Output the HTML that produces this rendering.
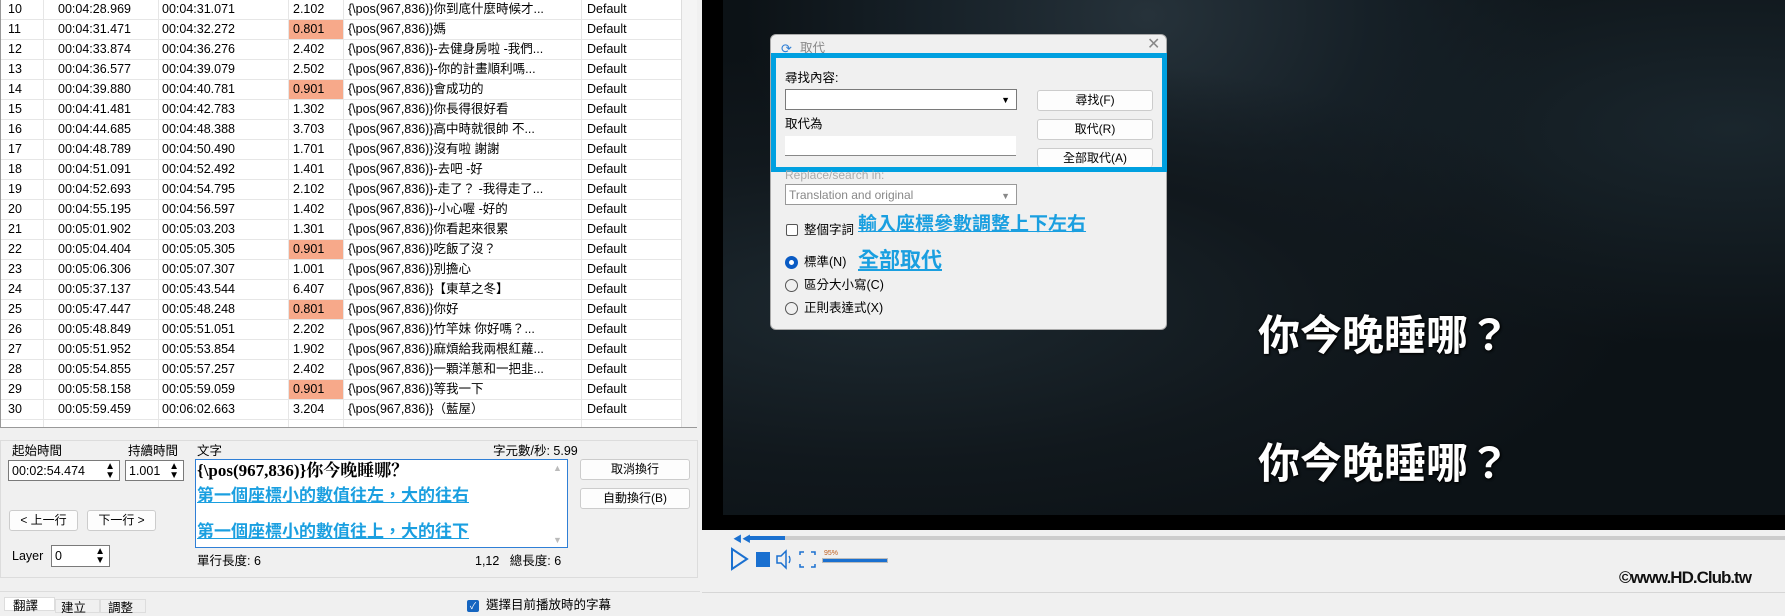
<!DOCTYPE html>
<html><head><meta charset="utf-8"><style>
*{box-sizing:border-box;margin:0;padding:0}
body{width:1785px;height:610px;overflow:hidden;background:#f0f0f0;position:relative;font-family:"Liberation Sans","Noto Sans CJK TC",sans-serif;font-size:12.5px;line-height:15px;color:#000}
.a{position:absolute;white-space:nowrap}
#tbl{position:absolute;left:0;top:0;width:697px;height:428px;background:#fff;border:1px solid #999;border-top:none;overflow:hidden}
.r{position:absolute;left:0;width:681px;height:20px;border-bottom:1px solid #e6e6e6}
.r span{position:absolute;top:2px;line-height:15px}
.c{position:absolute;top:0;width:1px;height:428px;background:#e6e6e6}
.hl{position:absolute;left:288px;width:54px;height:19px;background:#f7a98a}
.btn{position:absolute;background:#fdfdfd;border:1px solid #ccc;border-radius:3px;text-align:center;font-size:12px}
.inp{position:absolute;background:#fff;border:1px solid #7a7a7a}
.blue{color:#1a9fe0;font-weight:bold;text-decoration:underline}
</style></head><body>
<div id="tbl">
<div class="c" style="left:42px"></div><div class="c" style="left:157px"></div><div class="c" style="left:287px"></div><div class="c" style="left:342px"></div><div class="c" style="left:580px"></div><div class="c" style="left:681px"></div>
</div>
<div class="a" style="left:681px;top:0;width:16px;height:427px;background:#f4f4f4;border-left:1px solid #ddd"></div>

<!-- edit panel -->
<div class="a" style="left:0;top:440px;width:698px;height:138px;border:1px solid #dcdcdc;background:#f0f0f0"></div>
<div class="a" style="left:12px;top:444px">起始時間</div>
<div class="a" style="left:128px;top:444px">持續時間</div>
<div class="inp" style="left:8px;top:460px;width:112px;height:21px"><span class="a" style="left:3px;top:3px">00:02:54.474</span><span class="a" style="right:4px;top:1px;font-size:10px;line-height:9px">▲<br>▼</span></div>
<div class="inp" style="left:125px;top:460px;width:59px;height:21px"><span class="a" style="left:3px;top:3px">1.001</span><span class="a" style="right:4px;top:1px;font-size:10px;line-height:9px">▲<br>▼</span></div>
<div class="a" style="left:197px;top:444px">文字</div>
<div class="a" style="left:493px;top:444px">字元數/秒: 5.99</div>
<div class="a" style="left:195px;top:459px;width:373px;height:89px;background:#fff;border:1px solid #2f7fd6"></div>
<div class="a" style="left:197px;top:461px;line-height:20px;font-family:'Liberation Serif','Noto Serif CJK SC',serif;font-weight:bold;font-size:17px">{\pos(967,836)}你今晚睡哪？</div>
<div class="a blue" style="left:197px;top:485px;line-height:22px;font-size:17px">第一個座標小的數值往左，大的往右</div>
<div class="a blue" style="left:197px;top:521px;line-height:22px;font-size:17px">第一個座標小的數值往上，大的往下</div>
<div class="a" style="left:553px;top:461px;color:#bbb;font-size:9px">▲</div>
<div class="a" style="left:553px;top:533px;color:#bbb;font-size:9px">▼</div>
<div class="btn" style="left:580px;top:459px;width:110px;height:21px;line-height:19px">取消換行</div>
<div class="btn" style="left:580px;top:488px;width:110px;height:21px;line-height:19px">自動換行(B)</div>
<div class="btn" style="left:9px;top:510px;width:69px;height:21px;line-height:19px">&lt; 上一行</div>
<div class="btn" style="left:87px;top:510px;width:69px;height:21px;line-height:19px">下一行 &gt;</div>
<div class="a" style="left:12px;top:549px">Layer</div>
<div class="inp" style="left:51px;top:545px;width:59px;height:22px"><span class="a" style="left:3px;top:3px">0</span><span class="a" style="right:4px;top:1px;font-size:10px;line-height:9px">▲<br>▼</span></div>
<div class="a" style="left:197px;top:554px">單行長度: 6</div>
<div class="a" style="left:475px;top:554px">1,12 &nbsp;&nbsp;總長度: 6</div>
<div class="a" style="left:0;top:591px;width:700px;height:1px;background:#dcdcdc"></div>
<div class="a" style="left:4px;top:597px;width:51px;height:14px;background:#fff;border:1px solid #ddd;padding:1px 8px">翻譯</div>
<div class="a" style="left:55px;top:599px;width:45px;height:14px;border:1px solid #ddd;padding:1px 5px">建立</div>
<div class="a" style="left:100px;top:599px;width:46px;height:14px;border:1px solid #ddd;padding:1px 7px">調整</div>
<div class="a" style="left:467px;top:600px;width:12px;height:12px;background:#1565c0;border-radius:2px;color:#fff;font-size:9px;text-align:center;line-height:12px">✓</div>
<div class="a" style="left:486px;top:598px">選擇目前播放時的字幕</div>

<!-- video -->
<div class="a" style="left:702px;top:0;width:1083px;height:530px;background:#000"></div>
<div class="a" style="left:723px;top:0;width:1062px;height:515px;background:radial-gradient(ellipse at 15% 60%,#1d2930 0%,#11181d 35%,transparent 60%),radial-gradient(ellipse at 40% 3%,#26323a 0%,#162027 25%,transparent 45%),radial-gradient(ellipse at 95% 25%,#1a262d 0%,transparent 40%),#0c1216"></div>
<div class="a" style="left:1258px;top:312px;line-height:48px;color:#fff;font-size:42px;font-weight:bold;text-shadow:0 0 3px #000,1px 1px 2px #000">你今晚睡哪？</div>
<div class="a" style="left:1258px;top:440px;line-height:48px;color:#fff;font-size:42px;font-weight:bold;text-shadow:0 0 3px #000,1px 1px 2px #000">你今晚睡哪？</div>

<!-- dialog -->
<div class="a" style="left:770px;top:34px;width:397px;height:296px;background:#f0f0f0;border:1px solid #aaa;border-radius:6px"></div>
<div class="a" style="left:781px;top:41px;color:#2f7fd6;font-size:13px">⟳</div>
<div class="a" style="left:800px;top:41px;color:#888">取代</div>
<div class="a" style="left:1147px;top:37px;color:#888;font-size:16px">✕</div>
<div class="a" style="left:771px;top:53px;width:396px;height:119px;border:5px solid #00a0e0"></div>
<div class="a" style="left:785px;top:71px">尋找內容:</div>
<div class="inp" style="left:785px;top:89px;width:232px;height:21px"><span class="a" style="right:6px;top:3px;font-size:9px">▼</span></div>
<div class="a" style="left:785px;top:117px">取代為</div>
<div class="a" style="left:785px;top:136px;width:231px;height:20px;background:#fff;border-bottom:1px solid #888"></div>
<div class="btn" style="left:1037px;top:90px;width:116px;height:21px;line-height:19px">尋找(F)</div>
<div class="btn" style="left:1037px;top:119px;width:116px;height:21px;line-height:19px">取代(R)</div>
<div class="btn" style="left:1037px;top:148px;width:116px;height:19px;line-height:19px;border-bottom:none">全部取代(A)</div>
<div class="a" style="left:785px;top:168px;color:#aaa;font-size:12px">Replace/search in:</div>
<div class="inp" style="left:785px;top:184px;width:232px;height:21px;border-color:#999"><span class="a" style="left:3px;top:3px;color:#888;font-size:12px">Translation and original</span><span class="a" style="right:6px;top:4px;font-size:9px;color:#888">▼</span></div>
<div class="a" style="left:786px;top:224px;width:12px;height:12px;border:1px solid #555;border-radius:2px;background:#fff"></div>
<div class="a" style="left:804px;top:223px">整個字詞</div>
<div class="a blue" style="left:858px;top:214px;line-height:22px;font-size:19px">輸入座標參數調整上下左右</div>
<div class="a" style="left:785px;top:256px;width:13px;height:13px;border:4px solid #0a5bc4;border-radius:50%;background:#fff"></div>
<div class="a" style="left:804px;top:255px">標準(N)</div>
<div class="a blue" style="left:858px;top:249px;line-height:24px;font-size:21px">全部取代</div>
<div class="a" style="left:785px;top:279px;width:13px;height:13px;border:1px solid #555;border-radius:50%"></div>
<div class="a" style="left:804px;top:278px">區分大小寫(C)</div>
<div class="a" style="left:785px;top:302px;width:13px;height:13px;border:1px solid #555;border-radius:50%"></div>
<div class="a" style="left:804px;top:301px">正則表達式(X)</div>

<!-- player controls -->
<div class="a" style="left:733px;top:532px;color:#1a70d0;font-size:9px">◀◀</div>
<div class="a" style="left:749px;top:536px;width:1036px;height:4px;background:#ccc"></div>
<div class="a" style="left:749px;top:536px;width:36px;height:4px;background:#1a70d0"></div>
<svg class="a" style="left:729px;top:547px" width="90" height="24"><path d="M3 2 L18 12 L3 22 Z" fill="none" stroke="#1a70d0" stroke-width="2"/><rect x="27" y="5" width="14" height="15" fill="#1a70d0"/><path d="M48 9h4l5-5v17l-5-5h-4z" fill="none" stroke="#1a70d0" stroke-width="1.5"/><path d="M60 9q2 3.5 0 7" fill="none" stroke="#1a70d0" stroke-width="1.3"/><path d="M71 8V5h4M82 5h4v3M86 17v3h-4M75 20h-4v-3" fill="none" stroke="#1a70d0" stroke-width="1.5"/></svg>
<div class="a" style="left:824px;top:546px;font-size:7px;color:#c06020">95%</div>
<div class="a" style="left:822px;top:558px;width:66px;height:5px;background:#1a70d0;border:1px solid #bbb"></div>
<div class="a" style="left:1619px;top:568px;line-height:20px;font-size:17px;font-weight:bold;color:#111;text-shadow:0 0 1px #fff;letter-spacing:-1px">©www.HD.Club.tw</div>
<div class="a" style="left:702px;top:592px;width:1083px;height:1px;background:#d6d6d6"></div>

<script>
var d=[["10","00:04:28.969","00:04:31.071","2.102","{\\pos(967,836)}你到底什麼時候才...",0],
["11","00:04:31.471","00:04:32.272","0.801","{\\pos(967,836)}媽",1],
["12","00:04:33.874","00:04:36.276","2.402","{\\pos(967,836)}-去健身房啦 -我們...",0],
["13","00:04:36.577","00:04:39.079","2.502","{\\pos(967,836)}-你的計畫順利嗎...",0],
["14","00:04:39.880","00:04:40.781","0.901","{\\pos(967,836)}會成功的",1],
["15","00:04:41.481","00:04:42.783","1.302","{\\pos(967,836)}你長得很好看",0],
["16","00:04:44.685","00:04:48.388","3.703","{\\pos(967,836)}高中時就很帥 不...",0],
["17","00:04:48.789","00:04:50.490","1.701","{\\pos(967,836)}沒有啦 謝謝",0],
["18","00:04:51.091","00:04:52.492","1.401","{\\pos(967,836)}-去吧 -好",0],
["19","00:04:52.693","00:04:54.795","2.102","{\\pos(967,836)}-走了？ -我得走了...",0],
["20","00:04:55.195","00:04:56.597","1.402","{\\pos(967,836)}-小心喔 -好的",0],
["21","00:05:01.902","00:05:03.203","1.301","{\\pos(967,836)}你看起來很累",0],
["22","00:05:04.404","00:05:05.305","0.901","{\\pos(967,836)}吃飯了沒？",1],
["23","00:05:06.306","00:05:07.307","1.001","{\\pos(967,836)}別擔心",0],
["24","00:05:37.137","00:05:43.544","6.407","{\\pos(967,836)}【東草之冬】",0],
["25","00:05:47.447","00:05:48.248","0.801","{\\pos(967,836)}你好",1],
["26","00:05:48.849","00:05:51.051","2.202","{\\pos(967,836)}竹竿妹 你好嗎？...",0],
["27","00:05:51.952","00:05:53.854","1.902","{\\pos(967,836)}麻煩給我兩根紅蘿...",0],
["28","00:05:54.855","00:05:57.257","2.402","{\\pos(967,836)}一顆洋蔥和一把韭...",0],
["29","00:05:58.158","00:05:59.059","0.901","{\\pos(967,836)}等我一下",1],
["30","00:05:59.459","00:06:02.663","3.204","{\\pos(967,836)}（藍屋）",0]];
var h="";d.forEach(function(r,i){var t=i*20;
if(r[5])h+='<div class="hl" style="top:'+t+'px"></div>';
h+='<div class="r" style="top:'+t+'px"><span style="left:7px">'+r[0]+'</span><span style="left:57px">'+r[1]+'</span><span style="left:161px">'+r[2]+'</span><span style="left:292px">'+r[3]+'</span><span style="left:347px">'+r[4]+'</span><span style="left:586px">Default</span></div>';});
document.getElementById("tbl").insertAdjacentHTML("beforeend",h);
</script>
</body></html>
